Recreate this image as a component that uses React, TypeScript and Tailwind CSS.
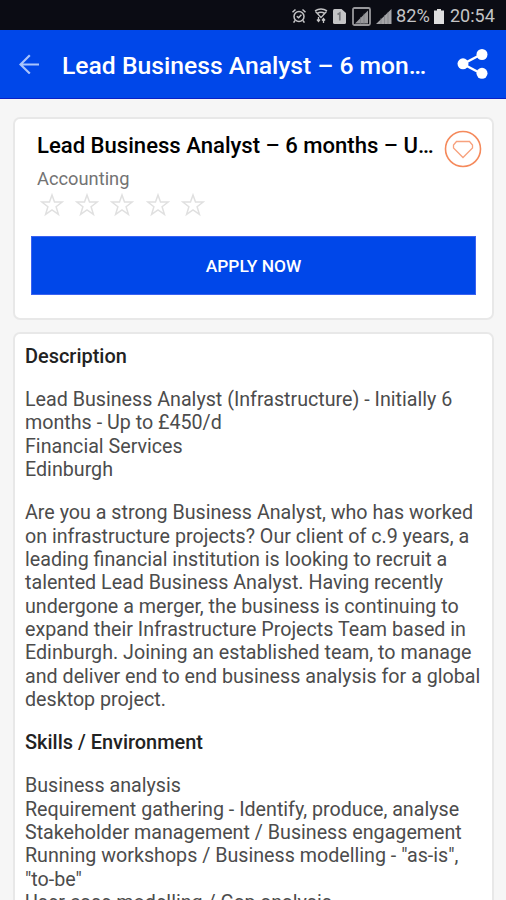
import type { ReactNode } from 'react';

const intro = [
  'Lead Business Analyst (Infrastructure) - Initially 6',
  'months - Up to £450/d',
  'Financial Services',
  'Edinburgh',
];

const about = [
  'Are you a strong Business Analyst, who has worked',
  'on infrastructure projects? Our client of c.9 years, a',
  'leading financial institution is looking to recruit a',
  'talented Lead Business Analyst. Having recently',
  'undergone a merger, the business is continuing to',
  'expand their Infrastructure Projects Team based in',
  'Edinburgh. Joining an established team, to manage',
  'and deliver end to end business analysis for a global',
  'desktop project.',
];

const skills = [
  'Business analysis',
  'Requirement gathering - Identify, produce, analyse',
  'Stakeholder management / Business engagement',
  'Running workshops / Business modelling - "as-is",',
  '"to-be"',
  'User case modelling / Gap analysis',
];

function StatusBar() {
  return (
    <div className="flex h-[30px] shrink-0 items-center bg-[#0b0c14] pl-[291px] pt-[2px] text-[#c4c4c6]">
      <svg className="h-4 w-4 shrink-0" viewBox="0 0 16 16" fill="none" stroke="currentColor" strokeWidth="1.5">
        <circle cx="8" cy="8.5" r="5" />
        <path d="M1.5 4.2 4.5 1.5M14.5 4.2 11.5 1.5M4 12.5 2.6 14.6M12 12.5l1.4 2.1M5.8 8.2l1.8 1.6 2.8-3" />
      </svg>
      <svg className="ml-[7px] h-4 w-[14px] shrink-0" viewBox="0 0 14 16" fill="none" stroke="currentColor" strokeWidth="1.5">
        <path d="M1 2.8C4.5.6 9.5.6 13 2.8M3.2 5.5c2.3-1.4 5.3-1.4 7.6 0" />
        <path d="M1.5 3.5 7 9.5l5.5-6" strokeWidth="1.2" />
        <path d="M4.5 9v4M3 11.5l1.5 2 1.5-2M9.5 15v-4.5M8 12.5l1.5-2 1.5 2" strokeWidth="1.3" />
      </svg>
      <svg className="ml-[5px] h-[15px] w-[13px] shrink-0" viewBox="0 0 13 15">
        <path d="M1.5 0h7L13 4v9.5q0 1.5-1.5 1.5h-10Q0 15 0 13.5v-12Q0 0 1.5 0z" fill="currentColor" />
        <path d="M4.5 5.5 6.8 4v7.5" stroke="#77787d" strokeWidth="1.7" fill="none" />
      </svg>
      <svg className="ml-[6px] h-[19px] w-[19px] shrink-0" viewBox="0 0 19 19">
        <rect x="1" y="1" width="17" height="17" rx="1.5" fill="none" stroke="#98989c" strokeWidth="1.8" />
        <path d="M3 16.500 16 3.500v13z" fill="#98989c" />
        <path d="M8.5 10v7M12 6.5V17" stroke="#77787d" strokeWidth=".6" />
      </svg>
      <svg className="ml-[5px] h-[15px] w-[16px] shrink-0" viewBox="0 0 16 15">
        <path d="M0 15 15.5 0v15z" fill="#a4a4a8" />
        <path d="M5 9v6M8.5 6v9M12 3v12" stroke="#77787d" strokeWidth=".6" />
      </svg>
      <span className="ml-[4px] w-[34px] shrink-0 whitespace-nowrap text-[18.2px] leading-none">82%</span>
      <svg className="ml-[4px] h-[15px] w-[10px] shrink-0" viewBox="0 0 10 15">
        <path d="M3 0h4v1.5h3V15H0V1.5h3z" fill="#dededf" />
      </svg>
      <span className="ml-[6px] whitespace-nowrap text-[18px] leading-none">20:54</span>
    </div>
  );
}

function Lines({ items }: { items: string[] }) {
  return (
    <p className="mb-[19.8px] text-[19.68px] text-[#4c4c4c]">
      {items.map((line) => (
        <span key={line} className="block whitespace-nowrap">
          {line}
        </span>
      ))}
    </p>
  );
}

function Heading({ children }: { children: ReactNode }) {
  return <h2 className="mb-[19.8px] text-[19.95px] font-medium text-[#222]">{children}</h2>;
}

function Star() {
  return (
    <svg className="h-6 w-6" viewBox="0 0 24 24" fill="none" stroke="#e0e0e0" strokeWidth="1.5">
      <path d="M12 2l2.5 7h7.7l-6.1 4.7 2.3 7.7L12 16.9l-6.400 4.5 2.3-7.7L1.8 9h7.7z" />
    </svg>
  );
}

export default function App() {
  return (
    <div className="flex h-[900px] w-[506px] flex-col overflow-hidden bg-[#f6f6f6] font-[Roboto,sans-serif]">
      <StatusBar />

      <header className="flex h-[69px] shrink-0 items-center border-b border-[#0b20c4] bg-[#0047e9] text-white">
        <svg className="ml-[19px] h-5 w-5 shrink-0" viewBox="0 0 20 20" fill="none" stroke="#a9c4fb" strokeWidth="2.2">
          <path d="M20 10.500H1.500M10.800 1.300 1.500 10.500l9.300 9" />
        </svg>
        <h1 className="ml-[23px] mt-[3px] w-[380px] whitespace-nowrap text-[24.7px] font-medium">
          Lead Business Analyst – 6 mon…
        </h1>
        <svg className="ml-[15px] h-8 w-8 shrink-0" viewBox="0 0 32 32" fill="currentColor">
          <path d="M25 6 6 16l19 10" fill="none" stroke="currentColor" strokeWidth="2.4" />
          <circle cx="25" cy="6.5" r="5.5" />
          <circle cx="6" cy="15.8" r="5.5" />
          <circle cx="25" cy="25.3" r="5.5" />
        </svg>
      </header>

      <main className="flex flex-col gap-3 pl-[13px] pr-[12px] pt-[18px]">
        <section className="h-[203px] rounded-[7px] border-2 border-[#e8e8e8] bg-white px-4 pt-[12px]">
          <div className="flex h-[36px] items-start">
            <h2 className="ml-[6px] w-[407px] shrink-0 whitespace-nowrap text-[22.1px] leading-[28px] font-medium text-black">
              Lead Business Analyst – 6 months – U…
            </h2>
            <svg className="-mt-px h-[38px] w-[38px] shrink-0" viewBox="0 0 38 38" fill="none" stroke="#f58a5c">
              <circle cx="19" cy="19" r="17.5" strokeWidth="1.6" />
              <path d="M12.500 11.500h13l3 3.500v3L19 27.500 9.500 18v-3z" strokeWidth="1.3" strokeOpacity=".8" />
            </svg>
          </div>
          <p className="ml-[6px] text-[18.3px] leading-[24px] text-[#737373]">Accounting</p>
          <div className="ml-[9px] mt-[2px] flex gap-[11.2px]">
            {[0, 1, 2, 3, 4].map((i) => (
              <Star key={i} />
            ))}
          </div>
          <button className="mt-[19px] block h-[59px] w-[445px] border border-[#3a62f0] bg-[#0047e9] pt-[2px] text-[17.4px] font-medium text-white">
            APPLY NOW
          </button>
        </section>

        <section className="h-[700px] shrink-0 rounded-[7px] border-2 border-[#e8e8e8] bg-white px-[10px] pt-[11px] text-[20px] leading-[23.35px]">
          <Heading>Description</Heading>
          <Lines items={intro} />
          <Lines items={about} />
          <Heading>Skills / Environment</Heading>
          <Lines items={skills} />
        </section>
      </main>
    </div>
  );
}
